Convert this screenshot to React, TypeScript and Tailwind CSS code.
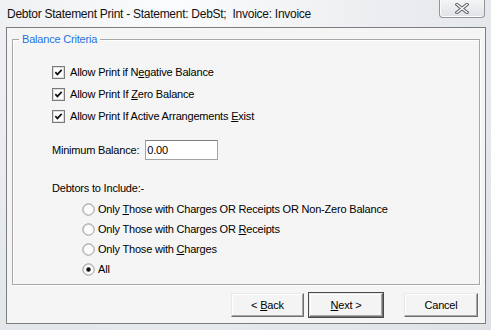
import React from "react";

const F = { fontFamily: '"Liberation Sans", Arial, sans-serif' };

function Check() {
  return (
    <svg width="13" height="13" viewBox="0 0 13 13" className="shrink-0">
      <rect x="0.5" y="0.5" width="12" height="12" fill="#ffffff" stroke="#7a7a7a" />
      <rect x="1.5" y="1.5" width="10" height="10" fill="none" stroke="#dcdcdc" />
      <path d="M3.3 6.2 L5.4 8.4 L9.7 3.9" fill="none" stroke="#111" strokeWidth="1.7" />
    </svg>
  );
}

function Radio({ on }: { on?: boolean }) {
  return (
    <svg width="13" height="13" viewBox="0 0 13 13" className="shrink-0">
      <defs>
        <linearGradient id="rg" x1="0" y1="0" x2="1" y2="1">
          <stop offset="0" stopColor="#d8d8d8" />
          <stop offset="1" stopColor="#ffffff" />
        </linearGradient>
      </defs>
      <circle cx="6.5" cy="6.5" r="5.7" fill="url(#rg)" stroke="#9a9a9a" />
      <circle cx="6.5" cy="6.5" r="4.4" fill="#fdfdfd" />
      {on && <circle cx="6.5" cy="6.5" r="2.2" fill="#111" />}
    </svg>
  );
}

function CheckRow({ children }: { children: React.ReactNode }) {
  return (
    <div className="flex h-[22px] items-center gap-[5px]">
      <Check />
      <span>{children}</span>
    </div>
  );
}

function RadioRow({ children, on }: { children: React.ReactNode; on?: boolean }) {
  return (
    <div className="flex h-[20px] items-center gap-[3px] pl-[30px]">
      <Radio on={on} />
      <span>{children}</span>
    </div>
  );
}

function Btn({ children, def, w }: { children: React.ReactNode; def?: boolean; w: string }) {
  return (
    <div
      className={`${w} h-[26px] ${def ? "border border-[#4a4a4a]" : "border border-transparent"}`}
    >
      <div className="flex h-full w-full items-center justify-center border border-t-[#e8e8e8] border-l-[#e8e8e8] border-r-[#6e6e6e] border-b-[#6e6e6e] bg-[#f4f4f4] shadow-[inset_-1px_-1px_0_#a8a8a8,inset_1px_1px_0_#ffffff]">
        <span>{children}</span>
      </div>
    </div>
  );
}

export default function App() {
  return (
    <div
      className="flex h-[330px] w-[491px] flex-col overflow-hidden bg-[radial-gradient(ellipse_at_35%_0%,#fbfcfd_0%,#eceef1_45%,#dde1e5_100%)] text-[11px] tracking-[-0.2px] text-black"
      style={F}
    >
      {/* title bar */}
      <div className="flex h-[27px] shrink-0 items-start">
        <div className="pl-[7px] pt-[5px] text-[12px] tracking-[-0.27px] text-[#111]">
          Debtor Statement Print - Statement: DebSt;&nbsp; Invoice: Invoice
        </div>
        <div className="ml-auto mr-[6px] flex h-[18px] w-[46px] items-center justify-center rounded-b-[4px] border border-t-0 border-[#8f959b] bg-[linear-gradient(#f4f5f6,#dfe2e5)] shadow-[inset_0_-1px_0_#ffffff,inset_1px_0_0_#fbfbfb]">
          <svg width="14" height="11" viewBox="0 0 14 11">
            <path d="M2 1.5 L12 9.5 M12 1.5 L2 9.5" stroke="#5a5f66" strokeWidth="3.4" strokeLinecap="square" />
            <path d="M2 1.5 L12 9.5 M12 1.5 L2 9.5" stroke="#ffffff" strokeWidth="1.4" strokeLinecap="square" />
          </svg>
        </div>
      </div>

      {/* client */}
      <div className="ml-[6px] mr-[5px] flex h-[297px] flex-col border border-[#7d7d7d] bg-[#f5f5f5] px-[5px]">
        <fieldset className="mt-[4px] h-[253px] border border-[#a7a7a7] pb-[4px] shadow-[inset_1px_1px_0_#ffffff,1px_1px_0_#ffffff]">
          <legend className="ml-[6px] px-[3px] leading-[14px] text-[#1f72e0]">Balance Criteria</legend>
          <div className="pl-[39px] pt-[15px]">
            <CheckRow>
              Allow Print if N<u>e</u>gative Balance
            </CheckRow>
            <CheckRow>
              Allow Print If <u>Z</u>ero Balance
            </CheckRow>
            <CheckRow>
              Allow Print If Active Arrangements <u>E</u>xist
            </CheckRow>
            <div className="mt-[13px] flex h-[20px] items-center gap-[6px]">
              <span>Minimum Balance:</span>
              <div className="flex h-[20px] w-[73px] items-center border border-[#a3a3a3] border-t-[#7f7f7f] bg-white pl-[1px]">
                0.00
              </div>
            </div>
            <div className="mt-[18px] flex h-[20px] items-center">Debtors to Include:-</div>
            <div className="mt-[1px]">
              <RadioRow>
                Only <u>T</u>hose with Charges OR Receipts OR Non-Zero Balance
              </RadioRow>
              <RadioRow>
                Only Those with Charges OR <u>R</u>eceipts
              </RadioRow>
              <RadioRow>
                Only Those with <u>C</u>harges
              </RadioRow>
              <RadioRow on>All</RadioRow>
            </div>
          </div>
        </fieldset>
        <div className="mt-[7px] flex justify-end pr-[1px]">
          <Btn w="w-[75px]">
            &lt; <u>B</u>ack
          </Btn>
          <div className="w-[3px]" />
          <Btn w="w-[76px]" def>
            <u>N</u>ext &gt;
          </Btn>
          <div className="w-[19px]" />
          <Btn w="w-[76px]">Cancel</Btn>
        </div>
      </div>
    </div>
  );
}
